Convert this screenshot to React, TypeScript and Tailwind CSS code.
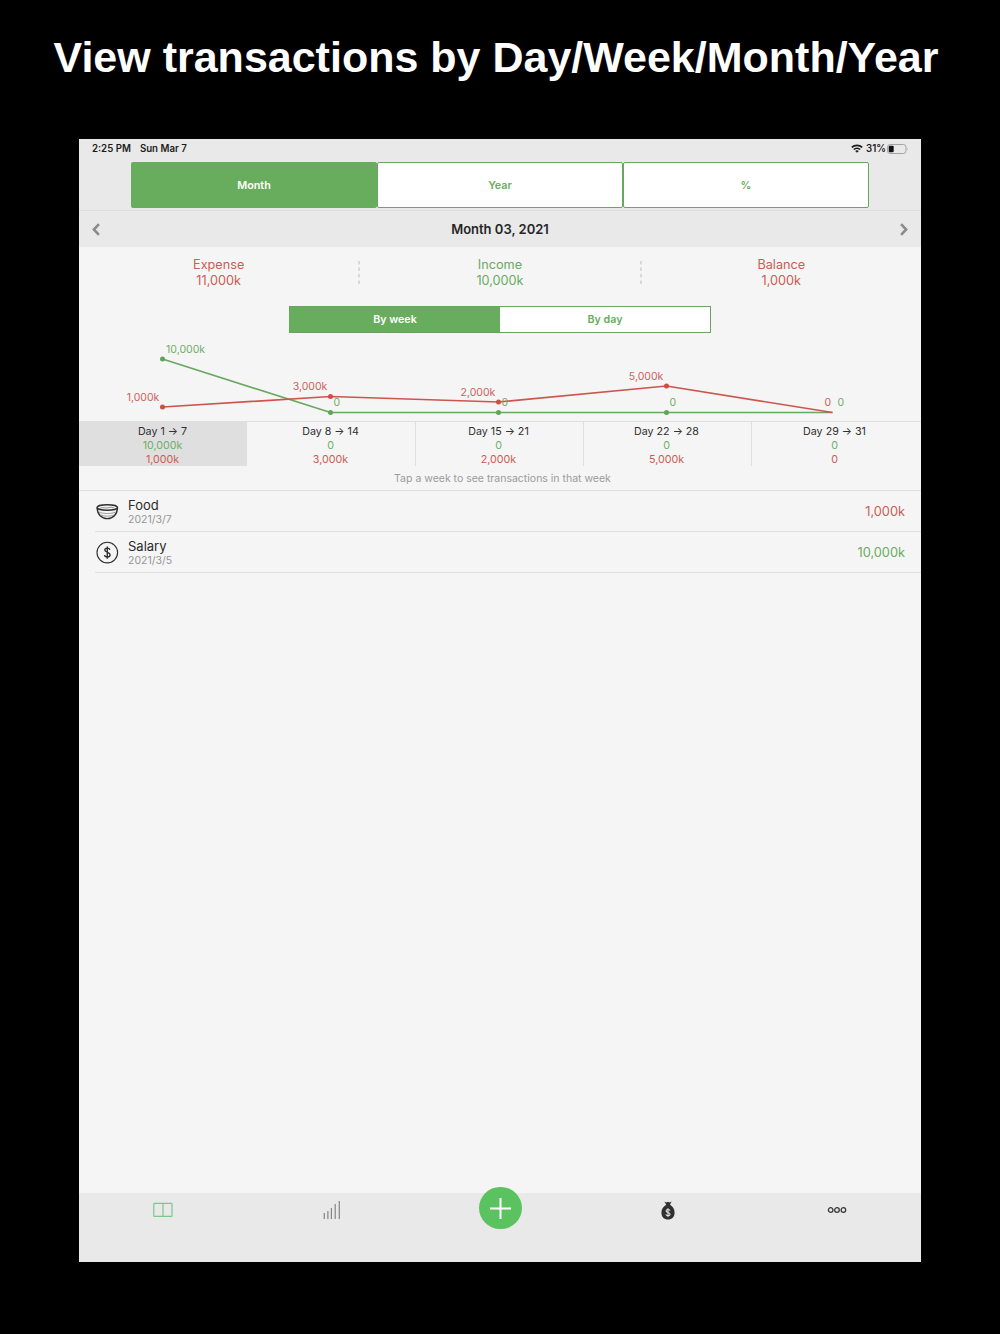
import React from "react";

const weeks = [
  { label: "Day 1 → 7", income: "10,000k", expense: "1,000k" },
  { label: "Day 8 → 14", income: "0", expense: "3,000k" },
  { label: "Day 15 → 21", income: "0", expense: "2,000k" },
  { label: "Day 22 → 28", income: "0", expense: "5,000k" },
  { label: "Day 29 → 31", income: "0", expense: "0" },
];

function StatusBar() {
  return (
    <div className="flex h-[23px] shrink-0 items-start pl-[13px] pr-3 pt-[2px] text-[9.7px] font-semibold leading-[14px] text-[#1c1c1c]">
      <span className="pt-px">2:25 PM</span>
      <span className="ml-[9px] pt-px">Sun Mar 7</span>
      <div className="ml-auto flex h-[15px] items-center">
        <svg width="12" height="9" viewBox="0 0 12 9" fill="none" stroke="#1c1c1c" strokeWidth="1.7">
          <path d="M0.8 3.4C3.7 .6 8.3 .6 11.2 3.4" />
          <path d="M2.8 5.5C4.6 3.8 7.4 3.8 9.2 5.5" />
          <path d="M6 8.8L4.2 7C5.2 6.1 6.8 6.1 7.8 7Z" fill="#1c1c1c" stroke="none" />
        </svg>
        <span className="ml-[3px]">31%</span>
        <svg className="ml-px" width="22" height="10" viewBox="0 0 22 10">
          <rect x="0.5" y="0.5" width="18.5" height="9" rx="2.6" fill="none" stroke="#a3a3a3" />
          <rect x="1.7" y="1.8" width="5" height="6.4" rx="1" fill="#111" />
          <path d="M20.3 3.5Q21.5 5 20.3 6.5Z" fill="#a3a3a3" />
        </svg>
      </div>
    </div>
  );
}

function PeriodTabs() {
  return (
    <div className="mx-[52px] flex h-[46px] w-[738px] shrink-0 text-[10.8px] font-semibold text-[#68ad5f]">
      <div className="flex w-[246px] items-center justify-center rounded-[2px] bg-[#68ad5d] pt-[2px] text-white">Month</div>
      <div className="flex w-[246px] items-center justify-center rounded-[2px] border border-[#68a55f] bg-white pt-[2px]">Year</div>
      <div className="flex w-[246px] items-center justify-center rounded-[2px] border border-[#68a55f] bg-white pt-[2px]">%</div>
    </div>
  );
}

function Chevron({ flip = false }: { flip?: boolean }) {
  return (
    <svg width="8" height="13" viewBox="0 0 8 13" fill="none" stroke="#8b8b8b" strokeWidth="2.6" className={flip ? "rotate-180" : ""}>
      <path d="M6.9 1.2L1.9 6.5L6.9 11.8" />
    </svg>
  );
}

function Total({ name, value, color }: { name: string; value: string; color: string }) {
  return (
    <div className={"flex flex-1 flex-col items-center pt-px text-[12.7px] leading-4 " + color}>
      <span>{name}</span>
      <span>{value}</span>
    </div>
  );
}

function Dashes() {
  return (
    <svg width="2" height="24" viewBox="0 0 2 24" className="mt-[5px]">
      <path d="M1 0V24" stroke="#cfcfcf" strokeWidth="1.5" strokeDasharray="3.5 3" />
    </svg>
  );
}

function Chart() {
  return (
    <svg width="842" height="88" viewBox="79 333 842 88" className="block shrink-0 text-[10.5px]">
      <g fill="none" strokeWidth="1.7">
        <path d="M162.5 359L330.5 412.5H832.5" stroke="#68a860" />
        <path d="M162.5 407L330.5 396.5L498.5 402L666.5 386L832.5 412.5" stroke="#cb564d" />
      </g>
      <g fill="#5fa558">
        <circle cx="162.5" cy="359" r="2.5" />
        <circle cx="330.5" cy="412.5" r="2.5" />
        <circle cx="498.5" cy="412.5" r="2.5" />
        <circle cx="666.5" cy="412.5" r="2.5" />
      </g>
      <g fill="#d14c43">
        <circle cx="162.5" cy="407" r="2.5" />
        <circle cx="330.5" cy="396.5" r="2.5" />
        <circle cx="498.5" cy="402" r="2.5" />
        <circle cx="666.5" cy="386" r="2.5" />
      </g>
      <g fill="#6fae68">
        <text x="166" y="353">10,000k</text>
        <text x="333.5" y="406">0</text>
        <text x="501.5" y="406">0</text>
        <text x="669.5" y="406">0</text>
        <text x="837.5" y="406">0</text>
      </g>
      <g fill="#cd625a" textAnchor="end">
        <text x="159.3" y="401">1,000k</text>
        <text x="327.3" y="390">3,000k</text>
        <text x="495.3" y="395.5">2,000k</text>
        <text x="663.3" y="379.5">5,000k</text>
        <text x="831" y="406">0</text>
      </g>
    </svg>
  );
}

function BowlIcon() {
  return (
    <svg width="24" height="24" viewBox="-0.3 0.4 24 24" fill="none" stroke="#2f2f2f" strokeWidth="1.4">
      <ellipse cx="12" cy="7.9" rx="10.2" ry="2.7" />
      <path d="M1.8 8C2 15 6.4 19 12 19S22 15 22.2 8" />
      <path d="M3.5 12.4C8 14.4 16 14.4 20.5 12.4M5.2 15.4C9 17 15 17 18.8 15.4" strokeWidth=".7" stroke="#777" />
      <path d="M5 8.6C8 7.2 10 9 13 8.1S17.5 8 19 8.6" strokeWidth=".7" stroke="#666" />
    </svg>
  );
}

function DollarIcon() {
  return (
    <svg width="24" height="24" viewBox="-0.3 0.4 24 24" fill="none" stroke="#2f2f2f" strokeWidth="1.1">
      <circle cx="12" cy="12" r="10.3" />
      <path d="M14.6 9.1C14.3 8 13.3 7.5 12 7.5C10.5 7.5 9.5 8.2 9.5 9.5C9.5 12.2 14.8 11.2 14.8 14.2C14.8 15.6 13.7 16.4 12 16.4C10.4 16.4 9.4 15.7 9.2 14.5M12 5.8V18.2" strokeWidth="1.4" />
    </svg>
  );
}

function Entry(props: { icon: React.ReactNode; name: string; date: string; amount: string; color: string }) {
  return (
    <div className="ml-4 flex h-[41px] shrink-0 items-center border-b border-[#dfdfdf] pr-4 pt-[2px]">
      {props.icon}
      <div className="ml-[9px] flex flex-col pt-px">
        <span className="text-[13px] leading-[14px] text-[#2b2b2b]">{props.name}</span>
        <span className="text-[10.5px] leading-[15px] text-[#969696]">{props.date}</span>
      </div>
      <span className={"ml-auto text-[12.8px] " + props.color}>{props.amount}</span>
    </div>
  );
}

function TabBar() {
  return (
    <div className="grid h-[69px] shrink-0 grid-cols-5 bg-[#e9e9e9]">
      <div className="flex justify-center pt-[9px]">
        <svg width="20" height="16" viewBox="0 0 20 16" fill="none" stroke="#79c88d" strokeWidth="1.2">
          <rect x="0.8" y="1.3" width="18.2" height="13" rx=".6" />
          <path d="M10 1.3V14.3" />
        </svg>
      </div>
      <div className="flex justify-center pt-[7px]">
        <svg width="18" height="20" viewBox="0 0 18 20" fill="none" stroke="#858585" strokeWidth="1.2">
          <path d="M1.3 13V19M4.9 11V19M8.4 8V19M12.2 4V19M16.3 1V19" />
        </svg>
      </div>
      <div className="flex justify-center pl-px">
        <div className="-mt-[6px] flex h-[42px] w-[43px] items-center justify-center rounded-full bg-[#5ac35f]">
          <svg width="23" height="23" viewBox="0 0 23 23" stroke="#fff" strokeWidth="2">
            <path d="M11.5 1V22M1 11.5H22" />
          </svg>
        </div>
      </div>
      <div className="flex justify-center pt-[8px]">
        <svg width="14" height="19" viewBox="0 0 14 19">
          <path d="M3.4 .7L5.5 1.4L7 .7L8.6 1.4L10.6 .5L9 3.8C11.8 5.4 13.6 8.3 13.6 11.4C13.6 15.8 11 18.4 7 18.4S.4 15.8 .4 11.4C.4 8.3 2.3 5.4 5.3 3.8Z" fill="#303030" />
          <path d="M9 9.6C8.6 8.7 8 8.5 7 8.5C5.8 8.5 5.1 9 5.1 9.9C5.1 11.9 9.1 11 9.1 13.2C9.1 14.2 8.2 14.7 7 14.7C5.8 14.7 5.1 14.2 4.9 13.3M7 7.2V16" fill="none" stroke="#e0e0e0" strokeWidth="1.1" />
        </svg>
      </div>
      <div className="flex justify-center pt-[13px]">
        <svg width="20" height="8" viewBox="0 0 20 8" fill="none" stroke="#3a3a3a" strokeWidth="1.3">
          <circle cx="3.7" cy="4" r="2.3" />
          <circle cx="10" cy="4" r="2.3" />
          <circle cx="16.4" cy="4" r="2.3" />
        </svg>
      </div>
    </div>
  );
}

export default function App() {
  return (
    <div className="flex h-[1334px] w-[1000px] flex-col overflow-hidden bg-black">
      <h1 className="flex h-[139px] shrink-0 justify-center whitespace-nowrap pr-2 pt-8 font-['Liberation_Sans',sans-serif] text-[43px] font-bold leading-[50px] text-white">
        View transactions by Day/Week/Month/Year
      </h1>
      <main className="ml-[79px] flex h-[1123px] w-[842px] shrink-0 flex-col bg-[#f5f5f5] font-['Inter',sans-serif]">
        <header className="flex h-[108px] shrink-0 flex-col bg-[#e9e9e9]">
          <StatusBar />
          <PeriodTabs />
          <div className="mt-[2px] flex h-[37px] items-center justify-between border-t border-[#dedede] pl-[13px] pr-[13px]">
            <Chevron />
            <span className="pt-[2px] text-[13px] font-semibold text-[#262626]">Month 03, 2021</span>
            <Chevron flip />
          </div>
        </header>
        <section className="flex h-[59px] shrink-0 pt-[9px]">
          <Total name="Expense" value="11,000k" color="text-[#cd5c53]" />
          <Dashes />
          <Total name="Income" value="10,000k" color="text-[#69ab61]" />
          <Dashes />
          <Total name="Balance" value="1,000k" color="text-[#cd5c53]" />
        </section>
        <div className="mx-auto flex h-[27px] w-[422px] shrink-0 border border-[#68a55f] bg-white text-[10.7px] font-semibold">
          <div className="flex flex-1 items-center justify-center bg-[#68ad5d] pt-[2px] text-white">By week</div>
          <div className="flex flex-1 items-center justify-center pt-[2px] text-[#68ad5f]">By day</div>
        </div>
        <Chart />
        <div className="flex h-[45px] shrink-0 border-t border-[#dedede] text-[10.7px]">
          {weeks.map((w, i) => (
            <div
              key={w.label}
              className={
                "flex w-[168px] flex-col items-center pt-[3px] leading-[14px] " +
                (i === 0 ? "bg-[#dfdfdf] pr-px" : i === 1 ? "pr-px" : "border-l border-[#dedede] pr-[2px]")
              }
            >
              <span className="text-[#303030]">{w.label}</span>
              <span className="text-[#6fae68]">{w.income}</span>
              <span className="text-[#cd5c53]">{w.expense}</span>
            </div>
          ))}
        </div>
        <p className="flex h-[25px] shrink-0 items-center justify-center border-b border-[#dedede] pl-[5px] pt-[2px] text-[10.5px] text-[#9b9b9b]">
          Tap a week to see transactions in that week
        </p>
        <Entry icon={<BowlIcon />} name="Food" date="2021/3/7" amount="1,000k" color="text-[#cd5c53]" />
        <Entry icon={<DollarIcon />} name="Salary" date="2021/3/5" amount="10,000k" color="text-[#69ab61]" />
        <div className="flex-1" />
        <TabBar />
      </main>
    </div>
  );
}
